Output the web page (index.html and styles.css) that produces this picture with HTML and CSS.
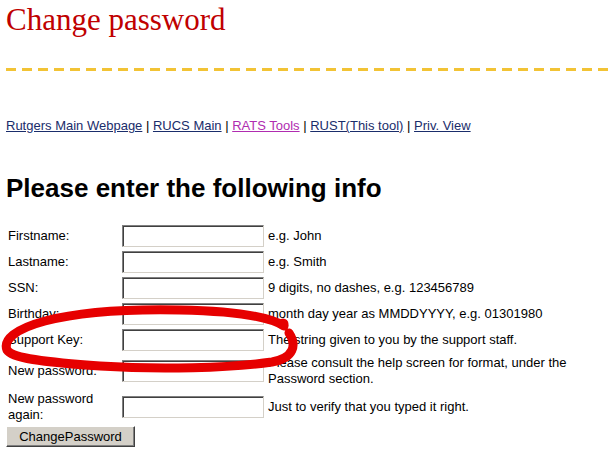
FILE: index.html
```html
<!DOCTYPE html>
<html>
<head>
<meta charset="utf-8">
<title>Change password</title>
<link rel="stylesheet" href="styles.css">
</head>
<body>
<div class="page">
  <h1 class="title">Change password</h1>
  <div class="dashes"></div>
  <nav class="nav">
    <a class="link" href="#">Rutgers Main Webpage</a> |
    <a class="link" href="#">RUCS Main</a> |
    <a class="link visited" href="#">RATS Tools</a> |
    <a class="link" href="#">RUST(This tool)</a> |
    <a class="link" href="#">Priv. View</a>
  </nav>
  <h2 class="heading">Please enter the following info</h2>
  <form class="form">
    <table class="fields">
      <tr><td class="label">Firstname:</td><td class="field"><input class="input" type="text"></td><td class="hint">e.g. John</td></tr>
      <tr><td class="label">Lastname:</td><td class="field"><input class="input" type="text"></td><td class="hint">e.g. Smith</td></tr>
      <tr><td class="label">SSN:</td><td class="field"><input class="input" type="text"></td><td class="hint">9 digits, no dashes, e.g. 123456789</td></tr>
      <tr><td class="label">Birthday:</td><td class="field"><input class="input" type="text"></td><td class="hint">month day year as MMDDYYYY, e.g. 01301980</td></tr>
      <tr><td class="label">Support Key:</td><td class="field"><input class="input" type="text"></td><td class="hint">The string given to you by the support staff.</td></tr>
      <tr><td class="label">New password:</td><td class="field"><input class="input" type="password"></td><td class="hint">Please consult the help screen for format, under the Password section.</td></tr>
      <tr><td class="label">New password again:</td><td class="field"><input class="input" type="password"></td><td class="hint">Just to verify that you typed it right.</td></tr>
    </table>
    <button class="button" type="button">ChangePassword</button>
  </form>
</div>
<svg class="scribble" width="616" height="466" viewBox="0 0 616 466">
  <path d="M 284 326 C 268 316, 230 311, 180 310 C 130 309, 80 312, 45 321 C 15 329, 3 340, 7 350 C 12 358, 40 362, 100 366 C 160 370, 230 368, 272 362 C 294 358, 297 345, 289 333" fill="none" stroke="#e60000" stroke-width="9" stroke-linecap="round" stroke-linejoin="round"/>
  <circle cx="283" cy="324" r="5.5" fill="#e60000"/>
</svg>
</body>
</html>
```

FILE: styles.css
```css
html, body {
  margin: 0;
  padding: 0;
  background: #ffffff;
}

.page {
  padding: 0 6px;
  font-family: "Liberation Sans", Arial, sans-serif;
  font-size: 13px;
  line-height: 16px;
  color: #000000;
}

.title {
  margin: 2px 0 0 0;
  font-family: "Liberation Serif", "Times New Roman", serif;
  font-weight: normal;
  font-size: 31px;
  line-height: 35px;
  color: #c00000;
}

.dashes {
  margin-top: 31px;
  height: 3px;
  background: repeating-linear-gradient(to right, #f2c335 0, #f2c335 10px, transparent 10px, transparent 16px);
}

.nav {
  margin-top: 47px;
  line-height: 16px;
}

.link {
  color: #1a2d6b;
  text-decoration: underline;
}

.link.visited {
  color: #b02cb0;
}

.heading {
  margin: 39px 0 0 0;
  font-size: 26px;
  line-height: 30px;
  font-weight: bold;
}

.form {
  margin: 20px 0 0 0;
}

.fields {
  border-collapse: collapse;
  border-spacing: 0;
}

.fields td {
  padding: 2px;
  vertical-align: middle;
}

.fields .label {
  width: 110px;
}

.input {
  display: block;
  box-sizing: border-box;
  width: 142px;
  height: 22px;
  margin: 0;
  padding: 0;
  border: 1px solid;
  border-color: #808080 #d4d0c8 #d4d0c8 #808080;
  box-shadow: inset 1px 1px 0 #404040;
  background: #ffffff;
}

.button {
  display: block;
  margin: 1px 0 0 0;
  box-sizing: border-box;
  width: 129px;
  height: 21px;
  padding: 0;
  font-family: "Liberation Sans", Arial, sans-serif;
  font-size: 13px;
  color: #000000;
  background: #d4d0c8;
  border: 1px solid;
  border-color: #ffffff #404040 #404040 #ffffff;
  box-shadow: inset -1px -1px 0 #808080;
}

.scribble {
  position: absolute;
  left: 0;
  top: 0;
  pointer-events: none;
}
```
